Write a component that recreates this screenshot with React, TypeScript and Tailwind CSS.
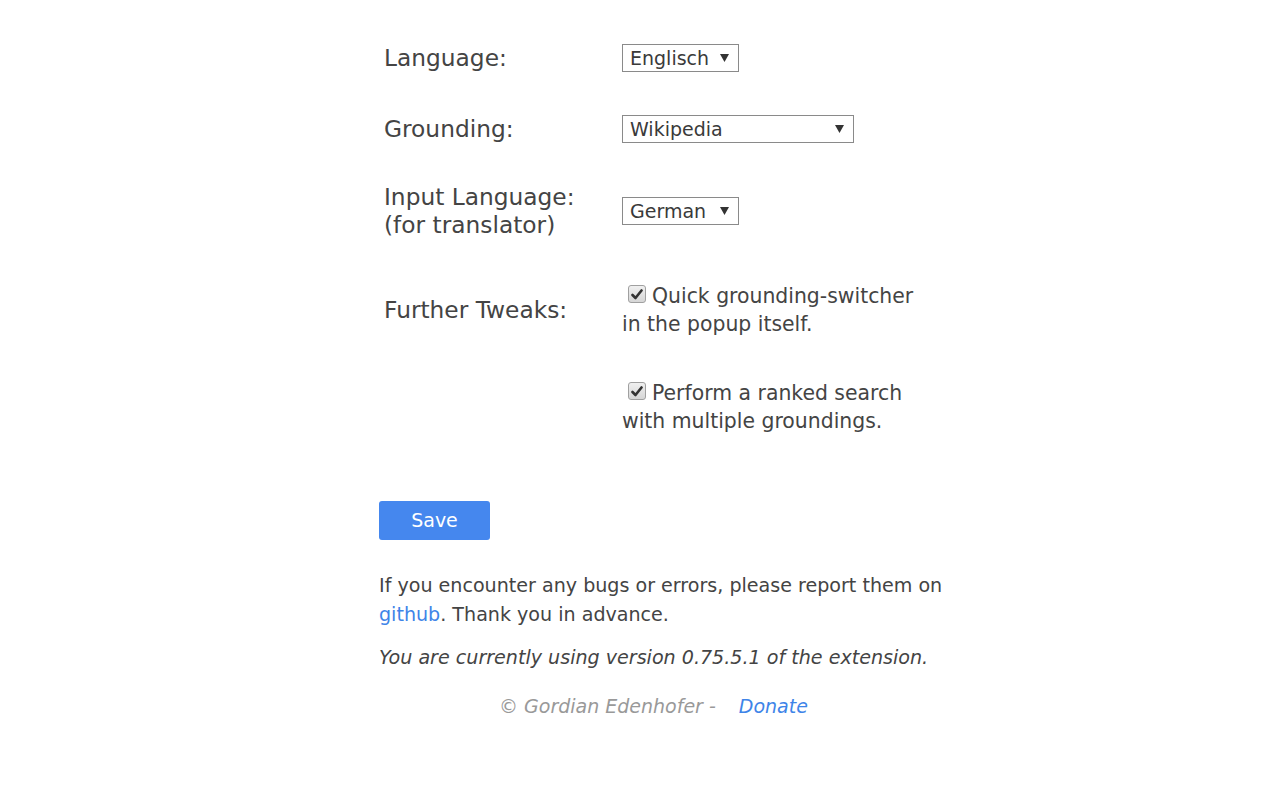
import React from "react";

const FONT = "font-[family-name:'DejaVu_Sans','Liberation_Sans',sans-serif]";

function FakeSelect({ value, width }: { value: string; width: string }) {
  return (
    <div
      className={`flex h-[28px] ${width} items-center justify-between border border-[#8a8a8a] bg-white pl-[7px] pr-[9px] text-[19px] leading-none text-[#3a3a3a]`}
    >
      <span>{value}</span>
      <svg width="9" height="8" viewBox="0 0 9 8" aria-hidden="true">
        <path d="M0 0 H9 L4.5 8 Z" fill="#333" />
      </svg>
    </div>
  );
}

function Checkbox() {
  return (
    <span className="relative top-[-3px] mr-[6px] ml-[6px] inline-flex h-[18px] w-[18px] items-center justify-center rounded-[3px] border border-[#a0a0a0] bg-gradient-to-b from-[#f0f0f0] to-[#d6d6d6] align-middle">
      <svg width="12" height="11" viewBox="0 0 12 11" aria-hidden="true">
        <path d="M1.5 6 L4.5 9 L10.5 1.5" stroke="#333" strokeWidth="2.6" fill="none" strokeLinecap="round" strokeLinejoin="round" />
      </svg>
    </span>
  );
}

function Row({
  label,
  className = "",
  children,
}: {
  label: React.ReactNode;
  className?: string;
  children: React.ReactNode;
}) {
  return (
    <div className={`flex items-center ${className}`}>
      <div className="w-[243px] pl-[5px] text-[23.3px] leading-[28px]">{label}</div>
      <div>{children}</div>
    </div>
  );
}

export default function App() {
  return (
    <div className={`min-h-[800px] w-full bg-white text-[#444] ${FONT}`}>
      <div className="ml-[379px] w-[572px] pt-[44px]">
        <Row label="Language:">
          <FakeSelect value="Englisch" width="w-[117px]" />
        </Row>
        <Row label="Grounding:" className="mt-[43px]">
          <FakeSelect value="Wikipedia" width="w-[232px]" />
        </Row>
        <Row
          className="mt-[40px]"
          label={
            <>
              Input Language:
              <br />
              (for translator)
            </>
          }
        >
          <FakeSelect value="German" width="w-[117px]" />
        </Row>
        <Row label="Further Tweaks:" className="mt-[43px]">
          <p className="w-[300px] text-[20.4px] leading-[28px]">
            <Checkbox />
            Quick grounding-switcher in the popup itself.
          </p>
        </Row>
        <Row label="" className="mt-[41px]">
          <p className="w-[300px] text-[20.4px] leading-[28px]">
            <Checkbox />
            Perform a ranked search with multiple groundings.
          </p>
        </Row>

        <button
          type="button"
          className="mt-[66px] h-[39px] w-[111px] rounded-[3px] bg-[#4587ee] text-[19px] text-white"
        >
          Save
        </button>

        <p className="mt-[31px] text-[19.1px] leading-[29px]">
          If you encounter any bugs or errors, please report them on{" "}
          <a className="text-[#3e84e8]">github</a>. Thank you in advance.
        </p>
        <p className="mt-[14px] text-[19.1px] italic leading-[29px]">
          You are currently using version 0.75.5.1 of the extension.
        </p>
        <p className="mt-[20px] pl-[120px] text-[19px] italic leading-[29px] text-[#999]">
          © Gordian Edenhofer -<span className="ml-[23px] text-[#3e84e8]">Donate</span>
        </p>
      </div>
    </div>
  );
}
